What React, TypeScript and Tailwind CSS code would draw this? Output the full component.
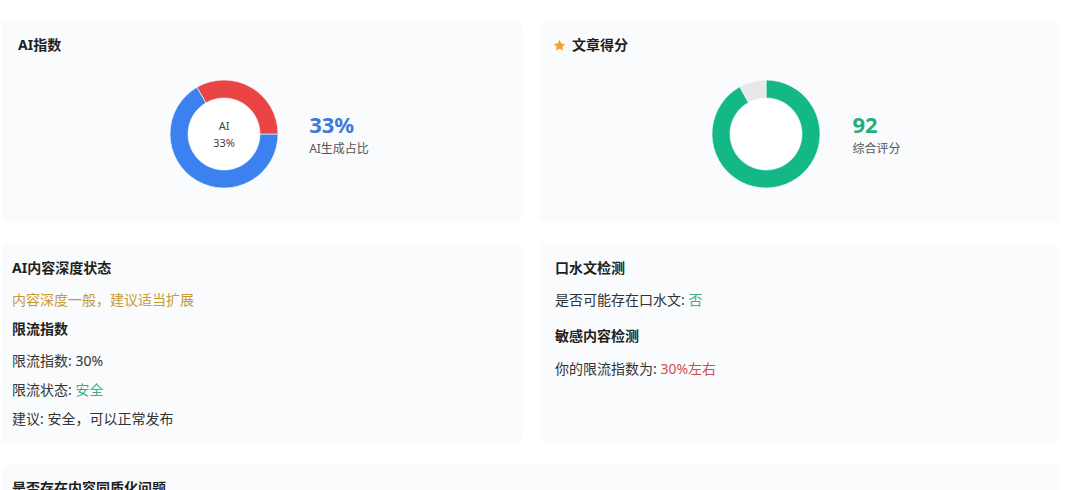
import React from 'react';

type Segment = { from: number; to: number; color: string };

// angles in degrees, clockwise from 12 o'clock
function arcPath(from: number, to: number, R: number, r: number, c: number) {
  const rad = (a: number) => ((a - 90) * Math.PI) / 180;
  const pt = (a: number, rr: number) => [c + rr * Math.cos(rad(a)), c + rr * Math.sin(rad(a))];
  const large = to - from > 180 ? 1 : 0;
  const [x1, y1] = pt(from, R);
  const [x2, y2] = pt(to, R);
  const [x3, y3] = pt(to, r);
  const [x4, y4] = pt(from, r);
  return `M${x1} ${y1} A${R} ${R} 0 ${large} 1 ${x2} ${y2} L${x3} ${y3} A${r} ${r} 0 ${large} 0 ${x4} ${y4} Z`;
}

function Donut({ segments, children }: { segments: Segment[]; children?: React.ReactNode }) {
  return (
    <div className="relative w-[108px] h-[108px] shrink-0">
      <svg width="108" height="108" viewBox="0 0 108 108">
        <circle cx="54" cy="54" r="36" fill="#ffffff" />
        {segments.map((s, i) => (
          <path key={i} d={arcPath(s.from, s.to, 54, 36, 54)} fill={s.color} stroke="#ffffff" strokeWidth="0.6" />
        ))}
      </svg>
      {children && (
        <div className="absolute inset-0 flex flex-col items-center justify-center text-[11px] leading-[17px] text-[#444]">
          {children}
        </div>
      )}
    </div>
  );
}

function Star() {
  return (
    <svg width="13" height="13" viewBox="0 0 24 24" className="shrink-0">
      <path d="M12 1.5l3.2 6.7 7.3.9-5.4 5 1.4 7.3L12 17.8l-6.5 3.6 1.4-7.3-5.4-5 7.3-.9z" fill="#f5a02a" />
    </svg>
  );
}

export default function App() {
  const font = { fontFamily: '"Noto Sans", "Noto Sans CJK SC", sans-serif' };
  return (
    <div className="w-[1080px] h-[490px] overflow-hidden bg-white text-[#333]" style={font}>
      <div className="grid grid-cols-2 gap-x-[16px] gap-y-[21px] pl-[2px] pr-[20px] pt-[20px]">
        {/* AI index */}
        <div className="h-[202px] rounded-lg bg-[#f9fbfc] px-[16px] pt-[15px]">
          <h3 className="text-[14px] leading-[20px] font-bold text-[#1f1f1f]">AI指数</h3>
          <div className="mt-[25px] flex items-center justify-center gap-[31px] pl-[14px]">
            <Donut
              segments={[
                { from: 90, to: 330, color: '#3b82f0' },
                { from: -30, to: 90, color: '#e94545' },
              ]}
            >
              <span>AI</span>
              <span>33%</span>
            </Donut>
            <div className="flex flex-col">
              <span className="text-[22px] leading-[26px] font-bold text-[#3f7bd6]">33%</span>
              <span className="mt-[3px] text-[12px] leading-[18px] text-[#555]">AI生成占比</span>
            </div>
          </div>
        </div>

        {/* article score */}
        <div className="h-[202px] rounded-lg bg-[#f9fbfc] px-[14px] pt-[15px]">
          <h3 className="flex items-center gap-[6px] text-[14px] leading-[20px] font-bold text-[#1f1f1f]">
            <Star />
            文章得分
          </h3>
          <div className="mt-[25px] flex items-center justify-center gap-[32px] pl-[14px]">
            <Donut
              segments={[
                { from: 0, to: 331, color: '#14b886' },
                { from: 331, to: 360, color: '#e6e8ea' },
              ]}
            />
            <div className="flex flex-col">
              <span className="text-[22px] leading-[26px] font-bold text-[#1fae7f]">92</span>
              <span className="mt-[3px] text-[12px] leading-[18px] text-[#555]">综合评分</span>
            </div>
          </div>
        </div>

        {/* depth + limit */}
        <div className="h-[201px] rounded-lg bg-[#f9fbfc] px-[10px] pt-[15px] text-[14px] leading-[20px]">
          <h3 className="font-bold text-[#1f1f1f]">AI内容深度状态</h3>
          <p className="mt-[12px] text-[#c99a35]">内容深度一般，建议适当扩展</p>
          <h3 className="mt-[9px] font-bold text-[#1f1f1f]">限流指数</h3>
          <p className="mt-[12px]">限流指数: 30%</p>
          <p className="mt-[9px]">
            限流状态: <span className="text-[#3fae7c]">安全</span>
          </p>
          <p className="mt-[9px]">建议: 安全，可以正常发布</p>
        </div>

        {/* filler + sensitive */}
        <div className="h-[200px] rounded-lg bg-[#f9fbfc] px-[16px] pt-[15px] text-[14px] leading-[20px]">
          <h3 className="font-bold text-[#1f1f1f]">口水文检测</h3>
          <p className="mt-[12px]">
            是否可能存在口水文: <span className="text-[#3fae7c]">否</span>
          </p>
          <h3 className="mt-[16px] font-bold text-[#1f1f1f]">敏感内容检测</h3>
          <p className="mt-[13px]">
            你的限流指数为: <span className="text-[#d24d4d]">30%左右</span>
          </p>
        </div>

        {/* homogeneity */}
        <div className="col-span-2 h-[120px] rounded-lg bg-[#f9fbfc] px-[10px] pt-[13px] text-[14px] leading-[20px]">
          <h3 className="font-bold text-[#1f1f1f]">是否存在内容同质化问题</h3>
        </div>
      </div>
    </div>
  );
}
